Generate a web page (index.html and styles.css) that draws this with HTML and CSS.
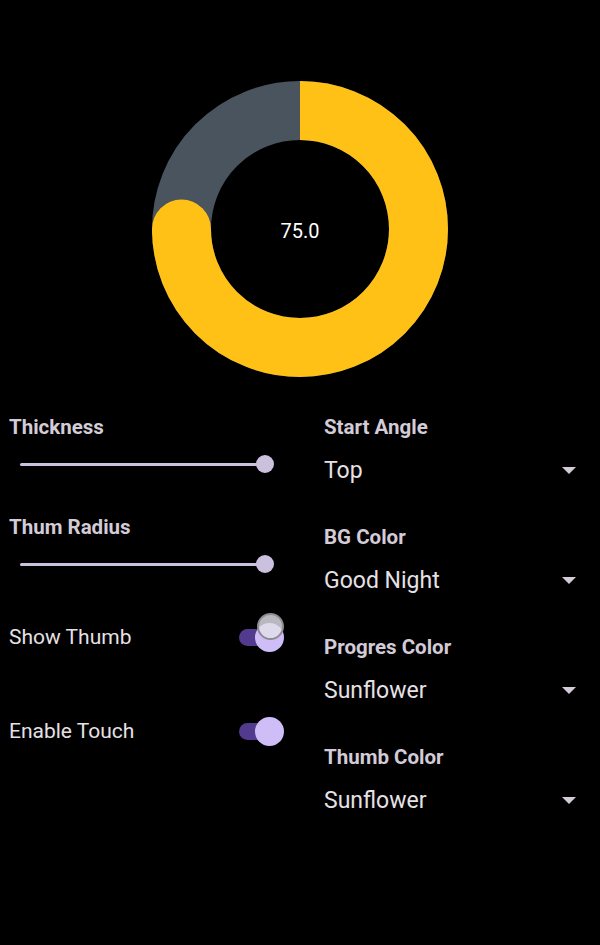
FILE: index.html
```html
<!DOCTYPE html>
<html>
<head>
<meta charset="utf-8">
<link rel="stylesheet" href="styles.css">
</head>
<body>
<div class="chart">
  <svg class="ring" width="296" height="296" viewBox="0 0 296 296">
    <circle cx="148" cy="148" r="118.5" fill="none" stroke="#4a545e" stroke-width="59"/>
    <path d="M148 29.5 A118.5 118.5 0 1 1 29.5 148" fill="none" stroke="#ffc116" stroke-width="59"/>
    <circle cx="29.5" cy="148" r="29.5" fill="#ffc116"/>
  </svg>
  <div class="value">75.0</div>
</div>
<div class="controls">
  <div class="col left">
    <div class="label">Thickness</div>
    <div class="slider slider-first"><div class="track"></div><div class="knob"></div></div>
    <div class="label">Thum Radius</div>
    <div class="slider"><div class="track"></div><div class="knob"></div></div>
    <div class="toggle-row first">
      <span class="toggle-text">Show Thumb</span>
      <div class="switch"><div class="sw-track"></div><div class="sw-thumb"></div><div class="sw-ripple"></div></div>
    </div>
    <div class="toggle-row">
      <span class="toggle-text">Enable Touch</span>
      <div class="switch"><div class="sw-track"></div><div class="sw-thumb"></div></div>
    </div>
  </div>
  <div class="col right">
    <div class="field">
      <div class="label">Start Angle</div>
      <div class="select"><span>Top</span><span class="arrow"></span></div>
    </div>
    <div class="field">
      <div class="label">BG Color</div>
      <div class="select"><span>Good Night</span><span class="arrow"></span></div>
    </div>
    <div class="field">
      <div class="label">Progres Color</div>
      <div class="select"><span>Sunflower</span><span class="arrow"></span></div>
    </div>
    <div class="field">
      <div class="label">Thumb Color</div>
      <div class="select"><span>Sunflower</span><span class="arrow"></span></div>
    </div>
  </div>
</div>
</body>
</html>
```
FILE: styles.css
```css
html, body {
  margin: 0;
  padding: 0;
  background: #000;
  font-family: Roboto, "Noto Sans", sans-serif;
  color: #e6e1e5;
}
body {
  width: 600px;
  height: 945px;
  overflow: hidden;
}
.chart {
  position: relative;
  width: 296px;
  height: 296px;
  margin: 81px auto 0;
}
.ring {
  display: block;
}
.value {
  position: absolute;
  left: 0;
  right: 0;
  top: 0;
  bottom: 0;
  display: flex;
  align-items: center;
  justify-content: center;
  font-size: 20px;
  color: #fff;
  padding-top: 3px;
}
.controls {
  display: grid;
  grid-template-columns: 300px 276px;
  column-gap: 24px;
  margin-top: 38px;
}
.label {
  height: 24px;
  line-height: 24px;
  font-size: 20.5px;
  font-weight: 700;
  color: #d3cbd7;
}
.left {
  padding-left: 9px;
}
.slider {
  position: relative;
  height: 50px;
  margin-left: 11px;
  width: 254px;
  display: flex;
  align-items: center;
}
.slider-first {
  margin-bottom: 26px;
}
.track {
  width: 245px;
  height: 3px;
  background: #cbc0de;
  border-radius: 2px;
}
.knob {
  position: absolute;
  left: 236px;
  top: 16px;
  width: 18px;
  height: 18px;
  border-radius: 50%;
  background: #cbc0de;
}
.toggle-row {
  display: flex;
  align-items: center;
  justify-content: space-between;
  height: 48px;
  width: 277px;
}
.toggle-row.first {
  margin-top: 24px;
  margin-bottom: 46px;
}
.toggle-text {
  font-size: 21px;
  color: #e6e1e5;
}
.switch {
  position: relative;
  width: 47px;
  height: 30px;
}
.sw-track {
  position: absolute;
  left: 0;
  top: 7px;
  width: 40px;
  height: 17px;
  border-radius: 9px;
  background: #523a8e;
}
.sw-thumb {
  position: absolute;
  left: 16px;
  top: 1px;
  width: 29px;
  height: 29px;
  border-radius: 50%;
  background: #cfbdf8;
}
.sw-ripple {
  position: absolute;
  left: 18px;
  top: -9px;
  width: 23px;
  height: 23px;
  border-radius: 50%;
  background: rgba(226, 224, 232, 0.82);
  border: 2px solid #8e8b92;
}
.right {
  display: flex;
  flex-direction: column;
}
.field {
  margin-bottom: 35px;
}
.select {
  display: flex;
  align-items: center;
  justify-content: space-between;
  height: 40px;
  margin-top: 11px;
  font-size: 23px;
  color: #e6e1e5;
  padding-right: 24px;
}
.arrow {
  width: 0;
  height: 0;
  border-left: 7px solid transparent;
  border-right: 7px solid transparent;
  border-top: 7px solid #d3cbd7;
}
```
